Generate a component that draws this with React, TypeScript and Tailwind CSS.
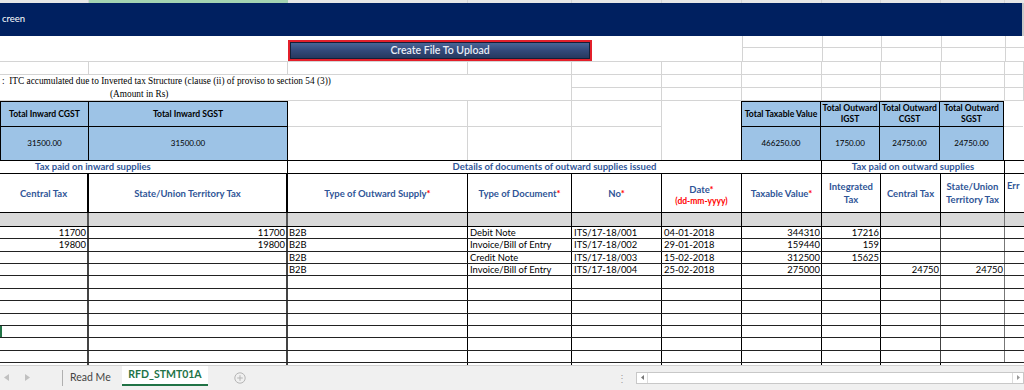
import React from "react";

/** Column widths of the visible sheet area (A..K) */
const W = {
  A: "w-[89px]",
  B: "w-[199px]",
  C: "w-[180px]",
  D: "w-[104px]",
  E: "w-[90px]",
  F: "w-[80px]",
  G: "w-[80px]",
  H: "w-[59px]",
  I: "w-[60px]",
  J: "w-[64px]",
  K: "w-[19px]",
};

type Row = {
  a?: string;
  b?: string;
  c?: string;
  d?: string;
  e?: string;
  f?: string;
  g?: string;
  h?: string;
  i?: string;
  j?: string;
};

const DATA: Row[] = [
  { a: "11700", b: "11700", c: "B2B", d: "Debit Note", e: "ITS/17-18/001", f: "04-01-2018", g: "344310", h: "17216" },
  { a: "19800", b: "19800", c: "B2B", d: "Invoice/Bill of Entry", e: "ITS/17-18/002", f: "29-01-2018", g: "159440", h: "159" },
  { c: "B2B", d: "Credit Note", e: "ITS/17-18/003", f: "15-02-2018", g: "312500", h: "15625" },
  { c: "B2B", d: "Invoice/Bill of Entry", e: "ITS/17-18/004", f: "25-02-2018", g: "275000", i: "24750", j: "24750" },
  {},
  {},
  {},
  {},
  {},
  {},
  {},
];

const grid = "border-r border-[#d4d4d4]";

function Star() {
  return <span className="text-[#ff0000]">*</span>;
}

function Blue({ w, children, className = "" }: { w: string; children?: React.ReactNode; className?: string }) {
  return (
    <div
      className={`${w} shrink-0 bg-[#9dc3e6] border-r border-b border-black flex items-center justify-center text-center leading-[11px] ${className}`}
    >
      {children}
    </div>
  );
}

function Head({ w, children, className = "" }: { w: string; children?: React.ReactNode; className?: string }) {
  return (
    <div
      className={`${w} shrink-0 border-r border-black flex flex-col items-center justify-center text-center font-bold text-[#2f5597] text-[9.5px] leading-[13px] ${className}`}
    >
      {children}
    </div>
  );
}

function Split({ w }: { w: string }) {
  return (
    <div className={`${w} shrink-0 ${grid} flex flex-col`}>
      <div className="h-[26px] border-b border-[#d4d4d4]" />
      <div className="flex-1" />
    </div>
  );
}

export default function App() {
  return (
    <div className="w-[1024px] h-[390px] overflow-hidden bg-white text-black [font-family:Lato,sans-serif]">
      {/* column header strip */}
      <div className="flex h-[3px] bg-[#e6e6e6]">
        <div className={`${W.A} shrink-0 ${grid}`} />
        <div className={`${W.B} shrink-0 bg-[#a4d3b1]`} />
        <div className={`${W.C} shrink-0 ${grid}`} />
        <div className={`${W.D} shrink-0 ${grid}`} />
        <div className={`${W.E} shrink-0 ${grid}`} />
        <div className={`${W.F} shrink-0 ${grid}`} />
        <div className={`${W.G} shrink-0 ${grid}`} />
        <div className={`${W.H} shrink-0 ${grid}`} />
        <div className={`${W.I} shrink-0 ${grid}`} />
        <div className={`${W.J} shrink-0 ${grid}`} />
      </div>

      {/* title band */}
      <div className="h-[33px] bg-[#002060] flex items-center pl-[2px] text-white text-[9.5px] border-r-2 border-[#c8c8c8]">
        creen
      </div>

      {/* button row */}
      <div className="flex h-[26px] border-b border-[#d4d4d4]">
        <div className="w-[742px] shrink-0 pl-[288px] pt-[4px]">
          <button className="block w-[304px] h-[21px] border-2 border-[#e3202b] bg-[#e3202b]">
            <div className="h-full border border-[#151f38] bg-gradient-to-b from-[#4a6596] via-[#33497a] to-[#26395f] flex items-center justify-center text-[#e9edf5] text-[10.5px] font-semibold">
              Create File To Upload
            </div>
          </button>
        </div>
        {[W.G, W.H, W.I, W.J, W.K].map((w) => (
          <div key={w} className={`${w} shrink-0 border-l border-[#d4d4d4] flex flex-col`}>
            <div className="h-[12px] border-b border-[#d4d4d4]" />
          </div>
        ))}
      </div>

      {/* blank row */}
      <div className="flex h-[13px] border-b border-[#d4d4d4]">
        {[W.A, W.B, W.C, W.D, W.E, W.F, W.G, W.H, W.I, W.J, W.K].map((w, i) => (
          <div key={i} className={`${w} shrink-0 ${grid}`} />
        ))}
      </div>

      {/* caption rows */}
      <div className="flex h-[25px]">
        <div className="w-[572px] shrink-0 border-r border-[#d4d4d4] [font-family:'Liberation_Serif',serif] text-[9.3px] leading-[12.5px]">
          <div className="pl-[2px] whitespace-nowrap">
            :&nbsp; ITC accumulated due to Inverted tax Structure (clause (ii) of proviso to section 54 (3))
          </div>
          <div className="pl-[110px] whitespace-nowrap">(Amount in Rs)</div>
        </div>
        {[W.E, W.F, W.G, W.H, W.I, W.J, W.K].map((w, i) => (
          <div key={i} className={`${w} shrink-0 ${grid} flex flex-col`}>
            <div className="h-[13px] border-b border-[#d4d4d4]" />
          </div>
        ))}
      </div>

      {/* summary boxes */}
      <div className="flex h-[60px] border-t border-[#d4d4d4]">
        <div className="flex flex-col border-l border-black">
          <div className="flex h-[26px] border-t border-black">
            <Blue w="w-[88px]" className="font-bold text-[8.6px]">Total Inward CGST</Blue>
            <Blue w={W.B} className="font-bold text-[8.6px]">Total Inward SGST</Blue>
          </div>
          <div className="flex h-[33px]">
            <Blue w="w-[88px]" className="text-[8px] border-b-0">31500.00</Blue>
            <Blue w={W.B} className="text-[8px] border-b-0">31500.00</Blue>
          </div>
        </div>
        <Split w={W.C} />
        <Split w={W.D} />
        <Split w={W.E} />
        <div className={`w-[79px] shrink-0`} />
        <div className="flex flex-col border-l border-black">
          <div className="flex h-[26px] border-t border-black">
            <Blue w="w-[79px]" className="font-bold text-[8.6px]">Total Taxable Value</Blue>
            <Blue w={W.H} className="font-bold text-[8.6px]">Total Outward IGST</Blue>
            <Blue w={W.I} className="font-bold text-[8.6px]">Total Outward CGST</Blue>
            <Blue w={W.J} className="font-bold text-[8.6px]">Total Outward SGST</Blue>
          </div>
          <div className="flex h-[33px]">
            <Blue w="w-[79px]" className="text-[8px] border-b-0">466250.00</Blue>
            <Blue w={W.H} className="text-[8px] border-b-0">1750.00</Blue>
            <Blue w={W.I} className="text-[8px] border-b-0">24750.00</Blue>
            <Blue w={W.J} className="text-[8px] border-b-0">24750.00</Blue>
          </div>
        </div>
        <div className={`${W.K} shrink-0 border-b border-[#d4d4d4] h-[26px]`} />
      </div>

      {/* group titles */}
      <div className="flex h-[14px] border-y border-black font-bold text-[#2f5597] text-[9.5px] leading-[12px]">
        <div className="w-[288px] shrink-0 border-r border-black pl-[35px]">Tax paid on inward supplies</div>
        <div className="w-[534px] shrink-0 border-r border-black text-center">
          Details of documents of outward supplies issued
        </div>
        <div className="w-[183px] shrink-0 border-r border-black text-center">Tax paid on outward supplies</div>
        <div className={`${W.K} shrink-0`} />
      </div>

      {/* column headers */}
      <div className="flex h-[39px] border-b border-black">
        <Head w={W.A} className="border-r-2">Central Tax</Head>
        <Head w={W.B} className="border-r-2">State/Union Territory Tax</Head>
        <Head w={W.C}>
          <span>
            Type of Outward Supply<Star />
          </span>
        </Head>
        <Head w={W.D}>
          <span>
            Type of Document<Star />
          </span>
        </Head>
        <Head w={W.E}>
          <span>
            No<Star />
          </span>
        </Head>
        <Head w={W.F} className="pt-[2px]">
          <span>
            Date<Star />
          </span>
          <span className="text-[#ff0000] text-[8.5px] leading-[10px]">(dd-mm-yyyy)</span>
        </Head>
        <Head w={W.G}>
          <span>
            Taxable Value<Star />
          </span>
        </Head>
        <Head w={W.H}>
          <span>Integrated</span>
          <span>Tax</span>
        </Head>
        <Head w={W.I}>Central Tax</Head>
        <Head w={W.J}>
          <span>State/Union</span>
          <span>Territory Tax</span>
        </Head>
        <div className={`${W.K} shrink-0 pl-[2px] pt-[5px] font-bold text-[#2f5597] text-[9.5px] overflow-hidden whitespace-nowrap`}>
          Err
        </div>
      </div>

      {/* grey spacer row */}
      <div className="flex h-[14px] border-b border-black bg-[#d9d9d9]">
        {[W.A, W.B].map((w, i) => (
          <div key={i} className={`${w} shrink-0 border-r-2 border-[#555]`} />
        ))}
        {[W.C, W.D, W.E, W.F, W.G, W.H, W.I].map((w, i) => (
          <div key={i} className={`${w} shrink-0 border-r border-black`} />
        ))}
        <div className={`${W.J} shrink-0 border-r border-[#777]`} />
      </div>

      {/* data rows */}
      {DATA.map((r, idx) => (
        <div key={idx} className="flex h-[12.36px] border-b border-[#222] text-[9.4px] leading-[11px]">
          <div
            className={`${W.A} shrink-0 border-r-2 border-r-[#444] text-right pr-[1px] ${idx === 8 ? "border-l-2 border-l-[#217346]" : ""}`}
          >
            {r.a}
          </div>
          <div className={`${W.B} shrink-0 border-r-2 border-[#444] text-right pr-[1px]`}>{r.b}</div>
          <div className={`${W.C} shrink-0 border-r border-black pl-[1px]`}>{r.c}</div>
          <div className={`${W.D} shrink-0 border-r border-black pl-[2px] whitespace-nowrap`}>{r.d}</div>
          <div className={`${W.E} shrink-0 border-r border-black pl-[2px]`}>{r.e}</div>
          <div className={`${W.F} shrink-0 border-r border-black pl-[2px]`}>{r.f}</div>
          <div className={`${W.G} shrink-0 border-r border-black text-right pr-[1px]`}>{r.g}</div>
          <div className={`${W.H} shrink-0 border-r border-black text-right pr-[1px]`}>{r.h}</div>
          <div className={`${W.I} shrink-0 border-r border-[#444] text-right pr-[1px]`}>{r.i}</div>
          <div className={`${W.J} shrink-0 border-r border-[#777] text-right pr-[1px]`}>{r.j}</div>
        </div>
      ))}
      <div className="flex h-[2px]">
        <div className={`${W.A} shrink-0 border-r-2 border-[#444]`} />
        <div className={`${W.B} shrink-0 border-r-2 border-[#444]`} />
        {[W.C, W.D, W.E, W.F, W.G, W.H, W.I].map((w, i) => (
          <div key={i} className={`${w} shrink-0 border-r border-black`} />
        ))}
      </div>

      {/* sheet tabs */}
      <div className="flex items-center h-[25px] bg-[#f0f0f0] border-t border-[#d0d0d0] text-[10.5px]">
        <div className="w-[62px] shrink-0 flex items-center gap-[16px] pl-[4px]">
          <svg width="5" height="7" viewBox="0 0 5 7">
            <path d="M5 0 L0 3.5 L5 7 Z" fill="#c0c0c0" />
          </svg>
          <svg width="5" height="7" viewBox="0 0 5 7">
            <path d="M0 0 L5 3.5 L0 7 Z" fill="#c0c0c0" />
          </svg>
        </div>
        <div className="h-[16px] border-l border-[#b0b0b0]" />
        <div className="w-[59px] shrink-0 pl-[7px] text-[#444]">Read Me</div>
        <div className="self-start h-[20px] w-[86px] shrink-0 bg-white border-b-2 border-[#217346] flex items-center justify-center font-bold text-[#217346]">
          RFD_STMT01A
        </div>
        <div className="ml-[26px]">
          <svg width="12" height="12" viewBox="0 0 12 12">
            <circle cx="6" cy="6" r="5.2" fill="none" stroke="#b5b5b5" />
            <path d="M6 3.2 V8.8 M3.2 6 H8.8" stroke="#b5b5b5" />
          </svg>
        </div>
        <div className="ml-[371px] text-[#a0a0a0] text-[10px] leading-none">⋮</div>
        <div className="ml-[9px] w-[392px] h-[12px] bg-white border border-[#c8c8c8] flex items-center justify-between">
          <div className="w-[11px] h-full border-r border-[#dcdcdc] flex items-center justify-center">
            <svg width="3" height="5" viewBox="0 0 3 5">
              <path d="M3 0 L0 2.5 L3 5 Z" fill="#777" />
            </svg>
          </div>
          <div className="w-[11px] h-full border-l border-[#dcdcdc] flex items-center justify-center">
            <svg width="3" height="5" viewBox="0 0 3 5">
              <path d="M0 0 L3 2.5 L0 5 Z" fill="#999" />
            </svg>
          </div>
        </div>
      </div>
    </div>
  );
}
